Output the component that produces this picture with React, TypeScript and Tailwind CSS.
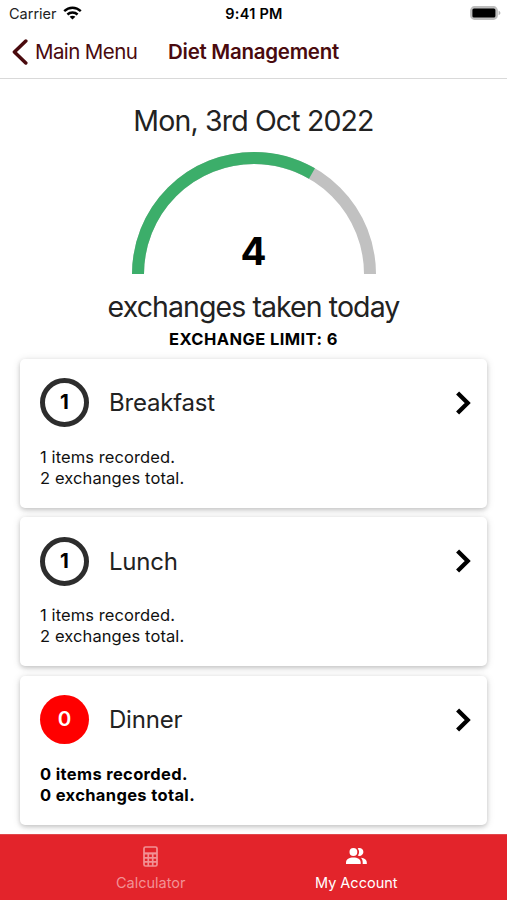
interface Meal {
  name: string;
  items: number;
  exchanges: number;
}

const meals: Meal[] = [
  { name: "Breakfast", items: 1, exchanges: 2 },
  { name: "Lunch", items: 1, exchanges: 2 },
  { name: "Dinner", items: 0, exchanges: 0 },
];

function StatusBar() {
  return (
    <div className="grid grid-cols-3 h-[27px] items-center pl-[9px] pr-[6px] text-black">
      <div className="flex items-center gap-[6px] text-[14.5px] text-[#222]">
        <span>Carrier</span>
        <svg className="-mt-[2px]" width="19" height="14" viewBox="0 0 19 14" fill="none" stroke="#000" strokeWidth="2.4">
          <path d="M1.2 5.2C6 .6 13 .6 17.8 5.2" />
          <path d="M4.4 8.5C7.3 5.8 11.7 5.8 14.6 8.5" />
          <path d="M9.5 13.6L6.6 10.7C8.2 9.3 10.8 9.3 12.4 10.7Z" fill="#000" stroke="none" />
        </svg>
      </div>
      <div className="-ml-[2px] text-center text-[14.5px] font-semibold tracking-[0.25px] whitespace-nowrap">9:41 PM</div>
      <svg className="-mt-[1px] justify-self-end" width="31" height="14" viewBox="0 0 31 14">
        <rect x="0.9" y="0.9" width="26.2" height="12.2" rx="3.6" fill="#bdbdbd" stroke="#bdbdbd" strokeWidth="1.6" />
        <rect x="2.4" y="2.4" width="23" height="9.2" rx="1.6" fill="#000" />
        <path d="M28.6 4.8v4.400c1.100-.4 1.800-1.200 1.800-2.200s-.7-1.800-1.800-2.200z" fill="#b5b5b5" />
      </svg>
    </div>
  );
}

function NavBar() {
  return (
    <div className="flex items-center h-[52px] border-b border-[#d9d9d9] pl-[12px] text-[20.5px] text-[#4a0a0e]">
      <svg className="-mt-[1px]" width="16" height="26" viewBox="0 0 16 26" fill="none">
        <path d="M13.8 2L2.4 13L13.8 24" stroke="currentColor" strokeWidth="3.5" strokeLinecap="round" strokeLinejoin="round" />
      </svg>
      <span className="w-[132px] pl-[7px] tracking-[-0.6px] whitespace-nowrap">Main Menu</span>
      <h1 className="pl-[8px] font-semibold tracking-[-0.27px] whitespace-nowrap">Diet Management</h1>
    </div>
  );
}

function Gauge({ value, limit }: { value: number; limit: number }) {
  return (
    <div className="relative w-[244px] h-[122px]">
      <svg width="244" height="122" viewBox="0 0 244 122" fill="none" strokeWidth="12">
        <path d="M6 122A116 116 0 0 1 238 122" stroke="#c1c1c1" />
        <path
          d="M6 122A116 116 0 0 1 238 122"
          stroke="#3cae6a"
          pathLength={limit}
          strokeDasharray={`${value} ${limit * 2}`}
        />
      </svg>
      <div className="absolute inset-x-0 bottom-0 text-center text-[38.5px] leading-[46px] font-bold text-black">{value}</div>
    </div>
  );
}

function MealCard({ meal }: { meal: Meal }) {
  const empty = meal.items === 0;
  return (
    <div className="h-[149px] rounded-[5px] bg-white px-[20px] pt-[19.5px] shadow-[0_2px_4px_rgba(0,0,0,0.16),0_1px_9px_rgba(0,0,0,0.12)]">
      <div className="flex items-center">
        <div
          className={
            empty
              ? "flex size-[49px] items-center justify-center rounded-full bg-[#ff0000] text-[20.5px] font-semibold text-white"
              : "flex size-[49px] items-center justify-center rounded-full border-[5px] border-[#2d2d2d] text-[20.5px] font-bold text-black"
          }
        >
          {meal.items}
        </div>
        <h2 className="ml-[20px] flex-1 pt-[1px] text-[24px] tracking-[-0.2px] text-[#222]">{meal.name}</h2>
        <svg className="mr-[-4px]" width="16" height="24" viewBox="0 0 16 24" fill="none">
          <path d="M2.600 2L12.700 12L2.600 22" stroke="#000" strokeWidth="4.300" />
        </svg>
      </div>
      <p
        className={
          empty
            ? "mt-[19.5px] text-[16.5px] leading-[21px] font-bold tracking-[0.35px] text-black"
            : "mt-[19.5px] text-[16.5px] leading-[21px] tracking-[0.1px] text-[#111]"
        }
      >
        {meal.items} items recorded.
        <br />
        {meal.exchanges} exchanges total.
      </p>
    </div>
  );
}

function TabBar() {
  return (
    <div className="grid h-[66px] grid-cols-2 border-t border-[#e0484d] bg-[#e3242b] px-[48px] text-[14.5px] text-white">
      <div className="flex flex-col items-center pt-[11px] text-[#f29195]">
        <svg width="15" height="21" viewBox="0 0 15 21" fill="none" stroke="currentColor" strokeWidth="1.7">
          <rect x="1" y="1" width="13" height="19" rx="1.5" />
          <path d="M1 7.400h13" strokeWidth="2.200" />
          <path d="M1 11.800h13M1 15.900h13M5.300 7v13M9.700 7v13" />
        </svg>
        <span className="mt-[6px] leading-[20px]">Calculator</span>
      </div>
      <div className="flex flex-col items-center pt-[11px]">
        <svg width="21" height="21" viewBox="0 0 21 21" fill="#fff">
          <circle cx="7.4" cy="6" r="3.9" />
          <path d="M0 18v-1.3c0-3.5 3.2-5.1 7.4-5.1s7.3 1.6 7.3 5.1V18z" />
          <path d="M11.7 2.400c2.600-1.100 5.700.7 5.700 3.600s-3.100 4.700-5.700 3.600c1.900-2 1.900-5.200 0-7.200z" />
          <path d="M14.900 11.800c3.700.3 5.900 2 5.900 4.900V18h-4.100v-1.300c0-2.100-.6-3.700-1.800-4.900z" />
        </svg>
        <span className="mt-[6px] leading-[20px]">My Account</span>
      </div>
    </div>
  );
}

export default function App() {
  return (
    <div className="flex h-[900px] w-[507px] flex-col overflow-hidden bg-white font-['Inter',sans-serif]">
      <StatusBar />
      <NavBar />
      <main className="flex flex-1 flex-col">
        <div className="flex flex-col items-center">
          <p className="mt-[24px] mb-[13px] text-[28.5px] leading-[36px] tracking-[-0.85px] text-[#222]">Mon, 3rd Oct 2022</p>
          <Gauge value={4} limit={6} />
          <p className="mt-[15px] text-[28.5px] leading-[36px] tracking-[-0.92px] text-[#222]">exchanges taken today</p>
          <p className="mt-[4px] text-[16.5px] leading-[20px] font-bold tracking-[0.42px] text-black">EXCHANGE LIMIT: 6</p>
        </div>
        <div className="mt-[9.5px] flex flex-col gap-[9.5px] px-[20px]">
          {meals.map((meal) => (
            <MealCard key={meal.name} meal={meal} />
          ))}
        </div>
      </main>
      <TabBar />
    </div>
  );
}
